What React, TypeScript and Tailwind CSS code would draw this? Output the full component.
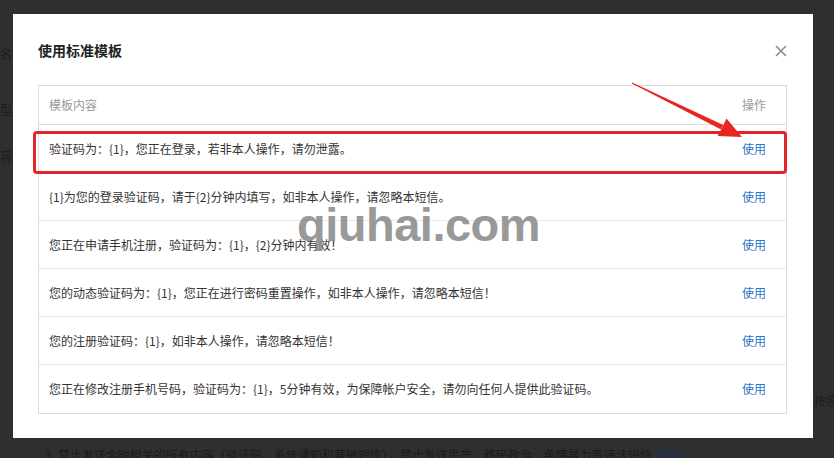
import React from "react";

const rows = [
  "验证码为：{1}，您正在登录，若非本人操作，请勿泄露。",
  "{1}为您的登录验证码，请于{2}分钟内填写，如非本人操作，请忽略本短信。",
  "您正在申请手机注册，验证码为：{1}，{2}分钟内有效！",
  "您的动态验证码为：{1}，您正在进行密码重置操作，如非本人操作，请忽略本短信！",
  "您的注册验证码：{1}，如非本人操作，请忽略本短信！",
  "您正在修改注册手机号码，验证码为：{1}，5分钟有效，为保障帐户安全，请勿向任何人提供此验证码。",
];

const font = { fontFamily: '"Microsoft YaHei", "Noto Sans CJK SC", "Noto Sans", sans-serif' };

export default function App() {
  return (
    <div
      className="relative w-[834px] h-[458px] overflow-hidden bg-[#2f2f2f] text-[12px]"
      style={font}
    >
      {/* dimmed page underneath (flow layout) */}
      <div className="flex flex-col h-full text-[#1d1d1d]">
        <div className="flex flex-1 justify-between">
          <div className="-ml-[40px] pt-[45px] flex flex-col w-[52px] text-right">
            <span>短信签名</span>
            <span className="mt-[38px]">模板类型</span>
            <span className="mt-[28px]">模板内容</span>
          </div>
          <div className="pt-[392px] -mr-[28px] whitespace-nowrap">按照国家</div>
        </div>
        <div className="h-[12px] pl-[45px] whitespace-nowrap text-[#1b1b1b]">
          3. 禁止发送金融相关的所有内容（验证码、系统通知和营销短信），禁止发送房产、移民政治、色情暴力等违法短信{" "}
          <span className="text-[#1d3552]">详情&gt;&gt;</span>
        </div>
      </div>

      {/* modal (overlay) */}
      <div className="absolute left-[13px] top-[14px] w-[800px] h-[424px] bg-white pl-[25px] pr-[26px]">
        <div className="flex items-center justify-between pt-[26px] pb-[25px]">
          <div className="h-[20px] leading-[20px] text-[14px] font-bold text-[#222]">使用标准模板</div>
          <svg width="12" height="12" viewBox="0 0 12 12" className="mt-[1px]">
            <path d="M1 1 L11 11 M11 1 L1 11" stroke="#8a8a8a" strokeWidth="1.6" />
          </svg>
        </div>

        <div className="border border-[#dcdcdc]">
          <div className="flex items-center justify-between h-[39px] border-b border-[#dcdcdc] pl-[10px] pr-[20px] text-[#999]">
            <span>模板内容</span>
            <span>操作</span>
          </div>
          {rows.map((r, i) => (
            <div
              key={i}
              className={
                "flex items-center justify-between h-[48px] pl-[10px] pr-[20px] " +
                (i < rows.length - 1 ? "border-b border-[#e8e8e8]" : "")
              }
            >
              <span className="text-[#333]">{r}</span>
              <span className="text-[#2a78c6]">使用</span>
            </div>
          ))}
        </div>
      </div>

      {/* watermark */}
      <div
        className="absolute left-[297px] top-[201px] text-[47px] font-bold leading-none text-[#8f8f8f] opacity-90 tracking-[-0.5px]"
        style={{ fontFamily: '"Liberation Sans", Arial, sans-serif' }}
      >
        qiuhai.com
      </div>

      {/* annotation: red box */}
      <div className="absolute left-[33px] top-[131px] w-[754px] h-[43px] border-[3px] border-[#e0262a] rounded-[4px]" />

      {/* annotation: arrow */}
      <svg className="absolute left-0 top-0" width="834" height="458" viewBox="0 0 834 458">
        <polygon
          points="631.8,83.4 632.2,82.6 723.3,125.1 721.1,129.5"
          fill="#e8261f"
        />
        <polygon points="742,137 717.5,136 722.5,127 726.5,118.5" fill="#e8261f" />
      </svg>
    </div>
  );
}
